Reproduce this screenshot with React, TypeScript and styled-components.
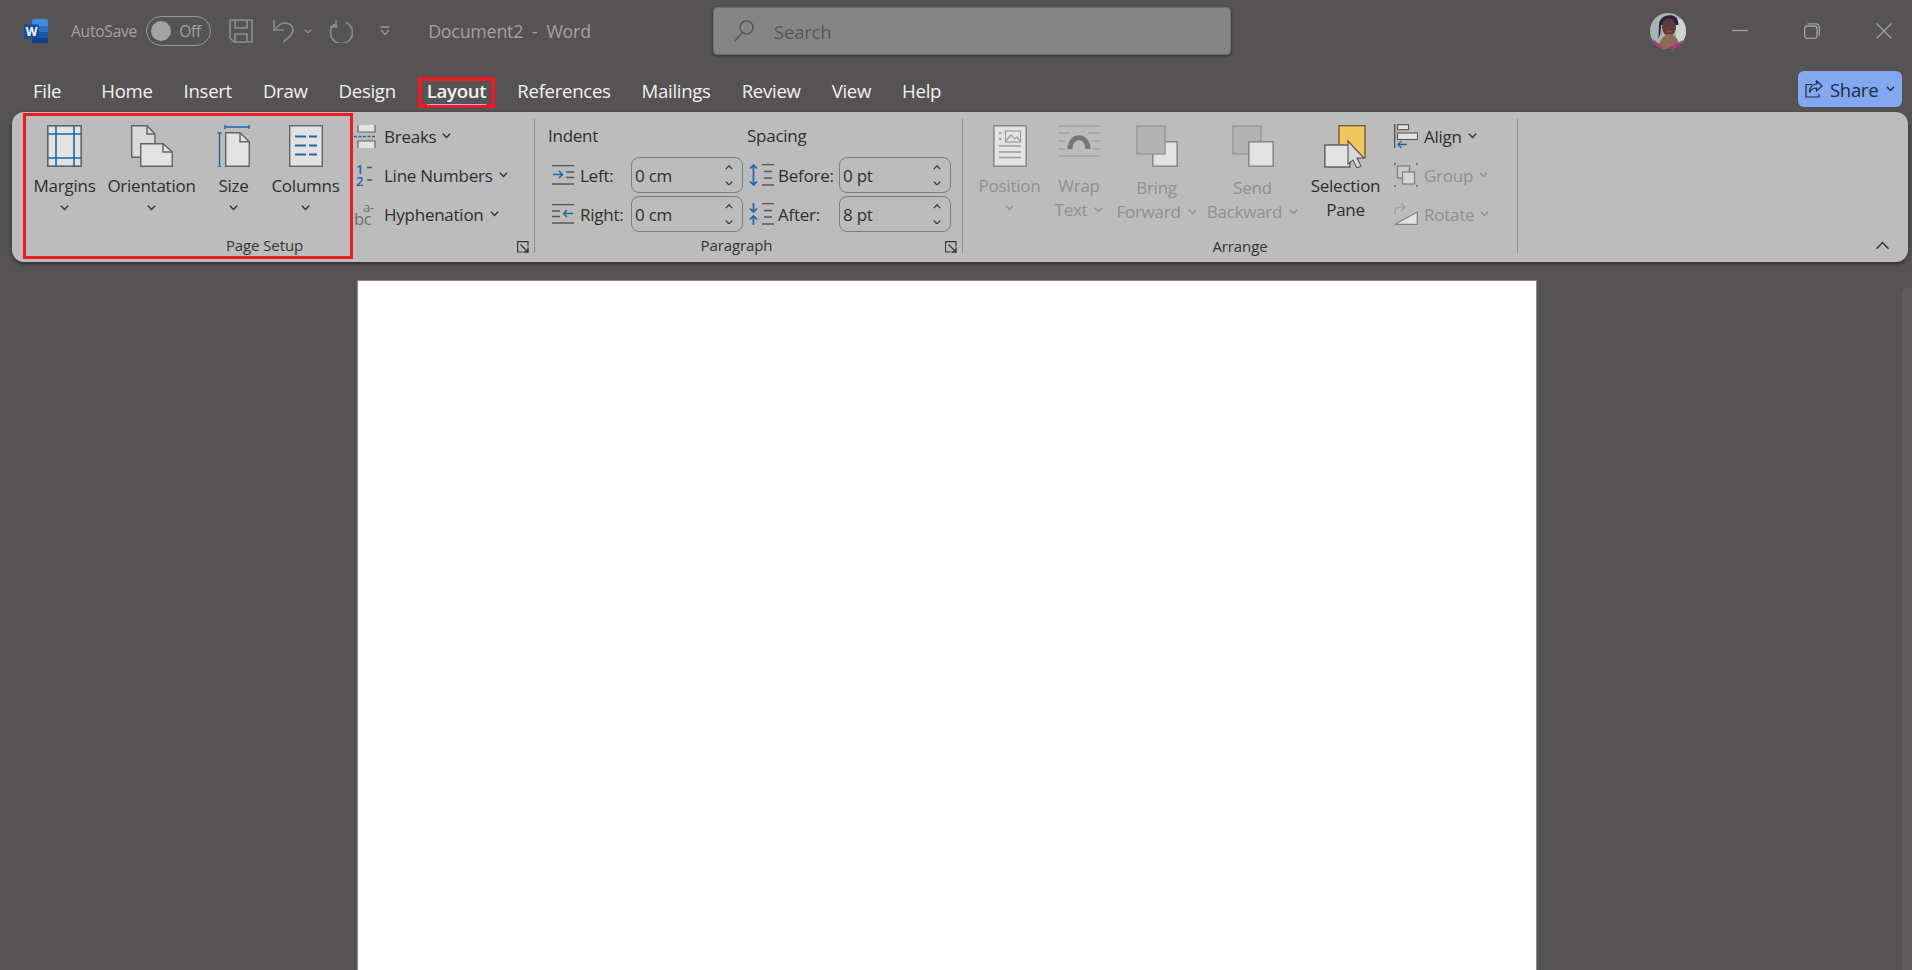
import React from "react";
import styled, { createGlobalStyle } from "styled-components";

const GlobalStyle = createGlobalStyle`
  html, body { margin: 0; padding: 0; background: #555354; }
  body { font-family: "Open Sans", "Noto Sans", "Liberation Sans", sans-serif; overflow: hidden; }
  * { box-sizing: border-box; }
`;

const OUT = "#636363";
const FILL = "#e3e3e3";
const BLUE = "#1c66a9";
const DIS = "#8f8f8f";

const Window = styled.div`
  width: 1912px;
  height: 970px;
  background: #555354;
  overflow: hidden;
  display: flex;
  flex-direction: column;
`;

/* title bar */
const TitleBar = styled.div`
  height: 62px;
  display: flex;
  align-items: center;
`;
const QuickAccess = styled.div`
  width: 713px;
  display: flex;
  align-items: center;
  padding-left: 24px;
`;
const Slot = styled.div<{ $ml?: number }>`
  display: flex;
  align-items: center;
  margin-left: ${(p) => p.$ml ?? 0}px;
`;
const DimText = styled.span<{ $ml?: number; $size?: number }>`
  color: #a2a2a2;
  font-size: ${(p) => p.$size ?? 15.5}px;
  margin-left: ${(p) => p.$ml ?? 0}px;
  white-space: pre;
  letter-spacing: -0.2px;
`;
const Toggle = styled.div`
  width: 65px;
  height: 30px;
  margin-left: 9px;
  border: 1.5px solid #999;
  border-radius: 15px;
  display: flex;
  align-items: center;
  padding-left: 4px;
  gap: 8px;
`;
const Knob = styled.div`
  width: 20px;
  height: 20px;
  border-radius: 50%;
  background: #a3a3a3;
`;
const SearchBox = styled.div`
  width: 518px;
  height: 48px;
  background: #858585;
  border: 1px solid #6f6f6f;
  border-radius: 4px;
  box-shadow: 0 1px 3px rgba(0, 0, 0, 0.45);
  display: flex;
  align-items: center;
  padding-left: 20px;
  gap: 20px;
`;
const SearchText = styled.span`
  color: #565656;
  font-size: 18.5px;
  letter-spacing: -0.2px;
`;
const CaptionArea = styled.div`
  margin-left: auto;
  display: flex;
  align-items: center;
  padding-right: 20px;
`;
const CaptionButton = styled.div`
  margin-left: 56px;
  display: flex;
`;
const AvatarWrap = styled.div`
  width: 36px;
  height: 36px;
  border-radius: 50%;
  overflow: hidden;
  margin-right: -10px;
`;

/* tabs */
const TabRow = styled.div`
  height: 50px;
  display: flex;
  align-items: flex-start;
  padding-left: 24.5px;
  gap: 14px;
`;
const Tab = styled.div<{ $active?: boolean; $mr?: number }>`
  position: relative;
  margin-top: 15px;
  margin-right: ${(p) => p.$mr ?? 0}px;
  height: 31px;
  padding: 0 8.5px 4.5px;
  display: flex;
  align-items: center;
  color: #f1f1f1;
  font-size: 18.6px;
  letter-spacing: -0.3px;
  font-weight: ${(p) => (p.$active ? 600 : 400)};
  outline: ${(p) => (p.$active ? "4px solid #ed1c24" : "none")};
  outline-offset: -4px;
  &::after {
    content: "";
    display: ${(p) => (p.$active ? "block" : "none")};
    position: absolute;
    left: 8.5px;
    right: 8.5px;
    bottom: 3px;
    height: 1.5px;
    background: #9db8f0;
  }
`;
const ShareButton = styled.div`
  margin: 9px 10px 0 auto;
  width: 104px;
  height: 36px;
  background: #82a8f0;
  border-radius: 6px;
  display: flex;
  align-items: center;
  padding-left: 7px;
  color: #1e2a42;
  font-size: 18.5px;
  letter-spacing: -0.3px;
`;
const ShareLabel = styled.span`
  margin-left: 7px;
  margin-right: 8px;
`;

/* ribbon */
const Ribbon = styled.div`
  position: relative;
  margin: 0 4px 0 12px;
  height: 150px;
  flex-shrink: 0;
  background: #bcbcbc;
  border-radius: 12px;
  box-shadow: 0 2px 4px rgba(0, 0, 0, 0.45);
  display: flex;
`;
const RedFrame = styled.div`
  position: absolute;
  left: 11px;
  top: 1px;
  width: 330px;
  height: 146px;
  border: 3.5px solid #ed1c24;
  pointer-events: none;
`;
const Group = styled.div<{ $w: number }>`
  width: ${(p) => p.$w}px;
  display: flex;
  flex-direction: column;
`;
const GroupBody = styled.div<{ $pl?: number }>`
  flex: 1;
  display: flex;
  padding-left: ${(p) => p.$pl ?? 0}px;
`;
const GroupFoot = styled.div`
  height: 18px;
  margin-bottom: 8px;
  display: flex;
  align-items: center;
`;
const GroupName = styled.div<{ $pr?: number; $drop?: number }>`
  flex: 1;
  text-align: center;
  padding-right: ${(p) => p.$pr ?? 0}px;
  padding-top: ${(p) => p.$drop ?? 0}px;
  font-size: 15px;
  letter-spacing: -0.1px;
  color: #333;
`;
const Launcher = styled.div`
  display: flex;
  margin-right: 5px;
  margin-top: 3px;
`;
const Divider = styled.div`
  width: 1px;
  margin: 7px 0 9px;
  background: #8e8e8e;
`;
const Spacer = styled.div`
  flex: 1;
  display: flex;
  justify-content: flex-end;
  align-items: flex-end;
  padding: 0 18px 12px 0;
`;

const LargeButton = styled.div<{ $w: number; $off?: boolean }>`
  width: ${(p) => p.$w}px;
  padding-top: 13px;
  display: flex;
  flex-direction: column;
  align-items: center;
  color: ${(p) => (p.$off ? DIS : "#2f2f2f")};
  font-size: 17px;
  letter-spacing: -0.25px;
`;
const LargeIcon = styled.div`
  height: 42px;
  margin-bottom: 7px;
  display: flex;
  align-items: flex-start;
`;
const LabelLine = styled.div<{ $drop?: number }>`
  height: 24px;
  line-height: 24px;
  white-space: nowrap;
  display: flex;
  align-items: center;
  gap: 7px;
  position: relative;
  top: ${(p) => p.$drop ?? 0}px;
`;
const ChevronLine = styled.div`
  height: 20px;
  display: flex;
  align-items: center;
`;
const SmallColumn = styled.div<{ $ml: number; $gap: number; $iconW: number }>`
  margin-left: ${(p) => p.$ml}px;
  padding-top: 5px;
  display: flex;
  flex-direction: column;
  --icon-w: ${(p) => p.$iconW}px;
  --icon-gap: ${(p) => p.$gap}px;
`;
const SmallButton = styled.div<{ $off?: boolean }>`
  height: 39px;
  display: flex;
  align-items: center;
  padding-bottom: 1px;
  color: ${(p) => (p.$off ? DIS : "#2f2f2f")};
  font-size: 17px;
  letter-spacing: -0.25px;
  white-space: nowrap;
`;
const SmallIcon = styled.div`
  width: var(--icon-w);
  margin-right: var(--icon-gap);
  display: flex;
  justify-content: center;
`;
const SmallText = styled.span`
  margin-right: 6px;
`;

/* paragraph */
const ParaColumn = styled.div<{ $ml: number; $rowPad: number; $iconW: number; $iconGap: number; $labelW: number }>`
  margin-left: ${(p) => p.$ml}px;
  padding-top: 4.5px;
  --row-pad: ${(p) => p.$rowPad}px;
  --icon-w: ${(p) => p.$iconW}px;
  --icon-gap: ${(p) => p.$iconGap}px;
  --label-w: ${(p) => p.$labelW}px;
`;
const ParaHead = styled.div`
  height: 39px;
  line-height: 37px;
  color: #2f2f2f;
  font-size: 17px;
  letter-spacing: -0.25px;
`;
const ParaRow = styled.div`
  height: 39px;
  display: flex;
  align-items: center;
  padding-left: var(--row-pad);
  color: #2f2f2f;
  font-size: 17px;
  letter-spacing: -0.25px;
`;
const ParaIcon = styled.div`
  width: var(--icon-w);
  margin-right: var(--icon-gap);
  display: flex;
`;
const ParaLabel = styled.div`
  width: var(--label-w);
  white-space: nowrap;
`;
const SpinField = styled.div`
  width: 112px;
  height: 36px;
  border: 1px solid #7c7c7c;
  border-radius: 8px;
  display: flex;
  align-items: center;
  justify-content: space-between;
  padding: 0 9px 0 3px;
`;
const SpinArrows = styled.div`
  display: flex;
  flex-direction: column;
  gap: 11px;
`;

const Workspace = styled.div`
  flex: 1;
  padding-top: 18px;
  display: flex;
  align-items: stretch;
`;
const Page = styled.div`
  margin-left: 357px;
  width: 1180px;
  background: #fff;
  border: 1px solid #8a8a8a;
  border-bottom: 0;
`;
const ScrollThumb = styled.div`
  margin: 8px 0 0 auto;
  width: 10px;
  background: #5f5d5e;
  border-radius: 5px 0 0 0;
`;

const Chevron = ({ up, color = "#333", w = 9, sw = 1.5 }: { up?: boolean; color?: string; w?: number; sw?: number }) => (
  <svg width={w} height={w * 0.6} viewBox="0 0 10 6" fill="none">
    <path d={up ? "M1 5.2 5 1l4 4.2" : "M1 .8 5 5l4-4.2"} stroke={color} strokeWidth={sw} />
  </svg>
);

const WordLogo = () => (
  <svg width="24" height="24" viewBox="0 0 24 24">
    <path d="M8 1.5A1.500 1.500 0 0 1 9.5 0h13A1.500 1.500 0 0 1 24 1.5V7H8z" fill="#3f8fe0" />
    <rect x="8" y="7" width="16" height="6" fill="#2a6fc9" />
    <rect x="8" y="13" width="16" height="6" fill="#1c54a8" />
    <path d="M8 19h16v3.5a1.500 1.500 0 0 1-1.500 1.500h-13A1.500 1.500 0 0 1 8 22.500z" fill="#123e8a" />
    <rect x="0" y="5.5" width="15" height="14" rx="1.5" fill="#164fa8" />
    <text x="7.5" y="16.5" textAnchor="middle" fontSize="12" fontWeight="700" fill="#fff" fontFamily="Open Sans, sans-serif">W</text>
  </svg>
);
const SaveIcon = () => (
  <svg width="24" height="24" viewBox="0 0 24 24" fill="none" stroke="#8e8e8e" strokeWidth="1.6">
    <path d="M1 1h22v22H5l-4-4z" />
    <path d="M6 1v8h12V1M6 23v-8h12v8" />
  </svg>
);
const UndoIcon = () => (
  <svg width="22" height="24" viewBox="0 0 22 24" fill="none" stroke="#8e8e8e" strokeWidth="1.6">
    <path d="M1 1v10h10" />
    <path d="M1.5 10.5 7 5.500c3-2.500 13-2 13 5.500 0 5-5 8-10 12" />
  </svg>
);
const RedoIcon = () => (
  <svg width="24" height="24" viewBox="0 0 24 24" fill="none" stroke="#8e8e8e" strokeWidth="1.6">
    <path d="M7 1v7H1" />
    <path d="M16 3.500A11 11 0 1 1 4 5.500L7.500 8" transform="translate(1 0)" />
  </svg>
);
const CustomizeIcon = () => (
  <svg width="10" height="10" viewBox="0 0 10 10" fill="none" stroke="#9a9a9a" strokeWidth="1.4">
    <path d="M.5 1h9M1 4l4 4.500L9 4" />
  </svg>
);
const SearchIcon = () => (
  <svg width="20" height="22" viewBox="0 0 20 22" fill="none" stroke="#585858" strokeWidth="1.5">
    <circle cx="12.5" cy="7.5" r="6.5" />
    <path d="M8 12.500 1 21" />
  </svg>
);
const Avatar = () => (
  <AvatarWrap>
    <svg width="36" height="36" viewBox="0 0 36 36">
      <rect width="36" height="36" fill="#aab3b2" />
      <rect x="26" y="6" width="10" height="24" fill="#cfd4d4" />
      <path d="M9 11C10 1 26 -1 28 8l.5 4H11l-.5 8-2 6z" fill="#25233c" />
      <ellipse cx="19" cy="14" rx="7" ry="9" fill="#5e3a30" />
      <path d="M13.500 10.500h4M20.500 10.500h4" stroke="#5c3a7a" strokeWidth="1.8" />
      <path d="M16 18.500h6" stroke="#8c4a4a" strokeWidth="1.5" />
      <path d="M8 36c1-8 6-15 11-15s10 4 11 15z" fill="#8f6a55" />
      <path d="M3 26l6 5 5 5H6zM33 27l-9 5-8 4h14z" fill="#b52e86" />
    </svg>
  </AvatarWrap>
);
const MinIcon = () => (
  <svg width="16" height="16" viewBox="0 0 16 16"><path d="M0 7.500h16" stroke="#a2a2a2" strokeWidth="1.3" /></svg>
);
const RestoreIcon = () => (
  <svg width="16" height="16" viewBox="0 0 16 16" fill="none" stroke="#a2a2a2" strokeWidth="1.3">
    <rect x=".7" y="3" width="12.3" height="12.3" rx="2.5" />
    <path d="M3.500.8H12a3.300 3.300 0 0 1 3.300 3.300V12.500" />
  </svg>
);
const CloseIcon = () => (
  <svg width="16" height="16" viewBox="0 0 16 16"><path d="M.5.500l15 15M15.500.500l-15 15" stroke="#a2a2a2" strokeWidth="1.3" /></svg>
);
const ShareIcon = () => (
  <svg width="18" height="18" viewBox="0 0 18 18" fill="none" stroke="#1e2a42" strokeWidth="1.2">
    <path d="M7 4.500H1V17h13v-3" />
    <path d="M11.500 1 17 6l-5.500 5V8C8 8 6 9.500 4.500 12.500 4.500 8 7 4.500 11.500 4z" />
  </svg>
);

const MarginsIcon = () => (
  <svg width="35" height="42" viewBox="0 0 35 42">
    <rect x=".8" y=".8" width="33.4" height="40.4" fill={FILL} stroke={OUT} strokeWidth="1.6" />
    <path d="M9 1v40M27 1v40M1 9h33M1 33h33" stroke={BLUE} strokeWidth="1.6" />
  </svg>
);
const OrientationIcon = () => (
  <svg width="42" height="42" viewBox="0 0 42 42" stroke={OUT} strokeWidth="1.4">
    <path d="M.7.700H16L24 9v23.300H.7z" fill="#dadada" />
    <path d="M16 .7V9h8" fill="none" />
    <path d="M9.700 18.700H32l9.300 8.300v14.300H9.700z" fill={FILL} />
    <path d="M32 18.700V27h9.300" fill="none" />
  </svg>
);
const SizeIcon = () => (
  <svg width="33" height="42" viewBox="0 0 33 42" fill="none">
    <path d="M8.700 7.700H23l9.300 9v24.600H8.700z" fill={FILL} stroke={OUT} strokeWidth="1.4" />
    <path d="M23 7.700v9h9.300" stroke={OUT} strokeWidth="1.4" />
    <path d="M8 2h24M8 0v4M32 0v4M2.500 8v34M.5 8h4M.5 42h4" stroke={BLUE} strokeWidth="1.4" />
  </svg>
);
const ColumnsIcon = () => (
  <svg width="34" height="42" viewBox="0 0 34 42">
    <rect x=".7" y=".7" width="32.6" height="40.6" fill={FILL} stroke={OUT} strokeWidth="1.4" />
    <path d="M6 11.500h11M20 11.500h8M6 20.500h11M20 20.500h8M6 29.500h11M20 29.500h8" stroke={BLUE} strokeWidth="1.8" />
  </svg>
);
const BreaksIcon = () => (
  <svg width="22" height="23" viewBox="0 0 22 23" fill={FILL} stroke={OUT} strokeWidth="1.2">
    <path d="M4 0v7h17V0" />
    <path d="M4 23v-7h17v7" />
    <path d="M0 11.500h22" stroke={BLUE} strokeDasharray="3 1.5" strokeWidth="1.3" fill="none" />
  </svg>
);
const LineNumbersIcon = () => (
  <svg width="18" height="34" viewBox="0 -6 18 34" fontFamily="Open Sans, sans-serif" fontSize="13">
    <text x="0" y="9.5" fill={BLUE} fontWeight="600">1</text>
    <text x="0" y="21.5" fill={BLUE} fontWeight="600">2</text>
    <path d="M11 3.500h5M11 16h5" stroke="#555" strokeWidth="1.5" />
  </svg>
);
const HyphenIcon = () => (
  <svg width="22" height="34" viewBox="0 -6 22 34" fontFamily="Open Sans, sans-serif" fill="#6e6e6e">
    <text x="9" y="9" fontSize="13">a-</text>
    <text x="0" y="22" fontSize="16.5">bc</text>
  </svg>
);
const LauncherIcon = () => (
  <svg width="12" height="12" viewBox="0 0 12 12" fill="none" stroke="#333" strokeWidth="1.1">
    <path d="M11 5.500V.6H.6V11h5" />
    <path d="M3.500 3.500 11 11M11 6.500V11H6.500" strokeWidth="1.4" />
  </svg>
);
const IndentLeftIcon = () => (
  <svg width="22" height="20" viewBox="0 0 22 20" fill="none">
    <path d="M0 .7h22M14 7h8M14 12.500h8M0 19h22" stroke="#555" strokeWidth="1.3" />
    <path d="M1 9.500h9M7 6l3.500 3.500L7 13" stroke={BLUE} strokeWidth="1.5" />
  </svg>
);
const IndentRightIcon = () => (
  <svg width="22" height="20" viewBox="0 0 22 20" fill="none">
    <path d="M0 .7h22M0 7h8M0 12.500h8M0 19h22" stroke="#555" strokeWidth="1.3" />
    <path d="M21 9.500h-9M15 6l-3.500 3.500L15 13" stroke={BLUE} strokeWidth="1.5" />
  </svg>
);
const SpaceBeforeIcon = () => (
  <svg width="25" height="22" viewBox="0 0 25 22" fill="none">
    <path d="M13 .7h12M15 7.500h8M15 14h8M13 21h12" stroke="#555" strokeWidth="1.3" />
    <path d="M4.500 1v20M1 4.500 4.500 1 8 4.500M1 17.500 4.500 21 8 17.500" stroke={BLUE} strokeWidth="1.7" />
  </svg>
);
const SpaceAfterIcon = () => (
  <svg width="25" height="22" viewBox="0 0 25 22" fill="none">
    <path d="M13 .7h12M15 7.500h8M15 14h8M13 21h12" stroke="#555" strokeWidth="1.3" />
    <path d="M4.500 0v9M1 5.500 4.500 9 8 5.500M4.500 22v-9M1 16.500 4.500 13 8 16.500" stroke={BLUE} strokeWidth="1.7" />
  </svg>
);
const PositionIcon = () => (
  <svg width="34" height="42" viewBox="0 0 34 42" fill="none">
    <rect x=".8" y=".8" width="32.4" height="40.4" fill={FILL} stroke="#8a8a8a" strokeWidth="1.6" />
    <rect x="12.5" y="6" width="15" height="11" stroke="#999" strokeWidth="1.2" />
    <path d="M13 16l5-6 4 4 2-2 3 4" stroke="#999" strokeWidth="1.2" />
    <path d="M6 8h3M6 14h3M6 21h22M6 27h22M6 32.500h22" stroke="#9a9a9a" strokeWidth="1.3" />
  </svg>
);
const WrapIcon = () => (
  <svg width="42" height="32" viewBox="0 0 42 32" fill="none">
    <path d="M0 1h42M0 31h42M0 8h12M30 8h12M0 16h7M35 16h7M0 24h7M35 24h7" stroke="#a0a0a0" strokeWidth="1.3" />
    <path d="M12 24c0-15 18-15 18 0" stroke="#777" strokeWidth="5" />
  </svg>
);
const LayerIcon = ({ front }: { front?: boolean }) => (
  <svg width="42" height="42" viewBox="0 0 42 42">
    {front ? (
      <>
        <rect x="16.8" y="16.8" width="24.4" height="24.4" fill={FILL} stroke="#8a8a8a" strokeWidth="1.6" />
        <rect x="1" y="1" width="28" height="28" fill="#b3b3b3" stroke="#9a9a9a" strokeWidth="1.6" />
      </>
    ) : (
      <>
        <rect x="1" y="1" width="28" height="28" fill="#b3b3b3" stroke="#9a9a9a" strokeWidth="1.6" />
        <rect x="16.8" y="16.8" width="24.4" height="24.4" fill={FILL} stroke="#8a8a8a" strokeWidth="1.6" />
      </>
    )}
  </svg>
);
const SelectionIcon = () => (
  <svg width="43" height="43" viewBox="0 0 43 43">
    <rect x="15" y=".7" width="26" height="32" fill="#f2c75f" stroke="#6a5a2a" strokeWidth="1.3" />
    <rect x=".8" y="20" width="25" height="22" fill={FILL} stroke={OUT} strokeWidth="1.5" />
    <path d="M24 16v23l5-4 4 8 4-2-4-8h7z" fill="#d8d8d8" stroke="#555" strokeWidth="1.1" />
  </svg>
);
const AlignIcon = () => (
  <svg width="24" height="24" viewBox="0 0 24 24" fill="none">
    <path d="M.7 0v24" stroke="#555" strokeWidth="1.4" />
    <rect x="3.5" y=".7" width="11" height="5" fill={FILL} stroke="#555" strokeWidth="1.1" />
    <rect x="3.5" y="9" width="20" height="6.5" fill={FILL} stroke="#555" strokeWidth="1.1" />
    <path d="M13 20.500H4M7.500 17 4 20.500 7.500 24" stroke={BLUE} strokeWidth="1.3" />
  </svg>
);
const GroupIcon = () => (
  <svg width="24" height="24" viewBox="0 0 24 24" fill="none">
    <path d="M0 0h2v2H0zM22 0h2v2h-2zM0 22h2v2H0zM22 22h2v2h-2z" fill="#777" />
    <rect x="3.5" y="3" width="12" height="12" stroke="#808080" strokeWidth="1.3" fill="#cdcdcd" />
    <rect x="8.5" y="9" width="12" height="12" stroke="#808080" strokeWidth="1.3" fill="#d5d5d5" />
  </svg>
);
const RotateIcon = () => (
  <svg width="24" height="22" viewBox="0 0 24 22" fill="none">
    <path d="M1 21.300 23.300 9v12.300z" fill={FILL} stroke="#808080" strokeWidth="1.3" />
    <path d="M1 12V8c0-3 2-4 5-4h4M7 0l4 4-4 4" stroke="#999" strokeWidth="1.1" />
  </svg>
);

const tabs = ["File", "Home", "Insert", "Draw", "Design", "Layout", "References", "Mailings", "Review", "View", "Help"];

const Spin = ({ value }: { value: string }) => (
  <SpinField>
    <span>{value}</span>
    <SpinArrows>
      <Chevron up w={8} />
      <Chevron w={8} />
    </SpinArrows>
  </SpinField>
);

export default function App() {
  return (
    <Window>
      <GlobalStyle />
      <TitleBar>
        <QuickAccess>
          <WordLogo />
          <DimText $ml={23}>AutoSave</DimText>
          <Toggle>
            <Knob />
            <DimText>Off</DimText>
          </Toggle>
          <Slot $ml={18}><SaveIcon /></Slot>
          <Slot $ml={20}><UndoIcon /></Slot>
          <Slot $ml={9}><Chevron color="#9a9a9a" w={8} /></Slot>
          <Slot $ml={17}><RedoIcon /></Slot>
          <Slot $ml={27}><CustomizeIcon /></Slot>
          <DimText $ml={38} $size={17.8}>Document2  -  Word</DimText>
        </QuickAccess>
        <SearchBox>
          <SearchIcon />
          <SearchText>Search</SearchText>
        </SearchBox>
        <CaptionArea>
          <Avatar />
          <CaptionButton><MinIcon /></CaptionButton>
          <CaptionButton><RestoreIcon /></CaptionButton>
          <CaptionButton><CloseIcon /></CaptionButton>
        </CaptionArea>
      </TitleBar>

      <TabRow>
        {tabs.map((t) => (
          <Tab key={t} $active={t === "Layout"} $mr={t === "File" ? 9 : 0}>{t}</Tab>
        ))}
        <ShareButton>
          <ShareIcon />
          <ShareLabel>Share</ShareLabel>
          <Chevron color="#1e2a42" />
        </ShareButton>
      </TabRow>

      <Ribbon>
        <RedFrame />
        <Group $w={522}>
          <GroupBody $pl={14}>
            <LargeButton $w={77}>
              <LargeIcon><MarginsIcon /></LargeIcon>
              <LabelLine>Margins</LabelLine>
              <ChevronLine><Chevron /></ChevronLine>
            </LargeButton>
            <LargeButton $w={97}>
              <LargeIcon><OrientationIcon /></LargeIcon>
              <LabelLine>Orientation</LabelLine>
              <ChevronLine><Chevron /></ChevronLine>
            </LargeButton>
            <LargeButton $w={67}>
              <LargeIcon><SizeIcon /></LargeIcon>
              <LabelLine>Size</LabelLine>
              <ChevronLine><Chevron /></ChevronLine>
            </LargeButton>
            <LargeButton $w={77}>
              <LargeIcon><ColumnsIcon /></LargeIcon>
              <LabelLine>Columns</LabelLine>
              <ChevronLine><Chevron /></ChevronLine>
            </LargeButton>
            <SmallColumn $ml={10} $gap={8} $iconW={22}>
              <SmallButton><SmallIcon><BreaksIcon /></SmallIcon><SmallText>Breaks</SmallText><Chevron /></SmallButton>
              <SmallButton><SmallIcon><LineNumbersIcon /></SmallIcon><SmallText>Line Numbers</SmallText><Chevron /></SmallButton>
              <SmallButton><SmallIcon><HyphenIcon /></SmallIcon><SmallText>Hyphenation</SmallText><Chevron /></SmallButton>
            </SmallColumn>
          </GroupBody>
          <GroupFoot>
            <GroupName>Page Setup</GroupName>
            <Launcher><LauncherIcon /></Launcher>
          </GroupFoot>
        </Group>
        <Divider />

        <Group $w={427}>
          <GroupBody>
            <ParaColumn $ml={13} $rowPad={4} $iconW={22} $iconGap={6} $labelW={51}>
              <ParaHead>Indent</ParaHead>
              <ParaRow><ParaIcon><IndentLeftIcon /></ParaIcon><ParaLabel>Left:</ParaLabel><Spin value="0 cm" /></ParaRow>
              <ParaRow><ParaIcon><IndentRightIcon /></ParaIcon><ParaLabel>Right:</ParaLabel><Spin value="0 cm" /></ParaRow>
            </ParaColumn>
            <ParaColumn $ml={4} $rowPad={2} $iconW={25} $iconGap={4} $labelW={61}>
              <ParaHead>Spacing</ParaHead>
              <ParaRow><ParaIcon><SpaceBeforeIcon /></ParaIcon><ParaLabel>Before:</ParaLabel><Spin value="0 pt" /></ParaRow>
              <ParaRow><ParaIcon><SpaceAfterIcon /></ParaIcon><ParaLabel>After:</ParaLabel><Spin value="8 pt" /></ParaRow>
            </ParaColumn>
          </GroupBody>
          <GroupFoot>
            <GroupName $pr={7}>Paragraph</GroupName>
            <Launcher><LauncherIcon /></Launcher>
          </GroupFoot>
        </Group>
        <Divider />

        <Group $w={554}>
          <GroupBody $pl={12}>
            <LargeButton $w={69} $off>
              <LargeIcon><PositionIcon /></LargeIcon>
              <LabelLine>Position</LabelLine>
              <ChevronLine><Chevron color={DIS} /></ChevronLine>
            </LargeButton>
            <LargeButton $w={70} $off>
              <LargeIcon><WrapIcon /></LargeIcon>
              <LabelLine>Wrap</LabelLine>
              <LabelLine>Text <Chevron color={DIS} /></LabelLine>
            </LargeButton>
            <LargeButton $w={85} $off>
              <LargeIcon><LayerIcon front /></LargeIcon>
              <LabelLine $drop={2}>Bring</LabelLine>
              <LabelLine $drop={2}>Forward <Chevron color={DIS} /></LabelLine>
            </LargeButton>
            <LargeButton $w={107} $off>
              <LargeIcon><LayerIcon /></LargeIcon>
              <LabelLine $drop={2}>Send</LabelLine>
              <LabelLine $drop={2}>Backward <Chevron color={DIS} /></LabelLine>
            </LargeButton>
            <LargeButton $w={79}>
              <LargeIcon><SelectionIcon /></LargeIcon>
              <LabelLine>Selection</LabelLine>
              <LabelLine>Pane</LabelLine>
            </LargeButton>
            <SmallColumn $ml={9} $gap={6} $iconW={24}>
              <SmallButton><SmallIcon><AlignIcon /></SmallIcon><SmallText>Align</SmallText><Chevron /></SmallButton>
              <SmallButton $off><SmallIcon><GroupIcon /></SmallIcon><SmallText>Group</SmallText><Chevron color={DIS} /></SmallButton>
              <SmallButton $off><SmallIcon><RotateIcon /></SmallIcon><SmallText>Rotate</SmallText><Chevron color={DIS} /></SmallButton>
            </SmallColumn>
          </GroupBody>
          <GroupFoot>
            <GroupName $drop={2}>Arrange</GroupName>
          </GroupFoot>
        </Group>
        <Divider />

        <Spacer><Chevron up w={15} sw={1} /></Spacer>
      </Ribbon>

      <Workspace>
        <Page />
        <ScrollThumb />
      </Workspace>
    </Window>
  );
}
